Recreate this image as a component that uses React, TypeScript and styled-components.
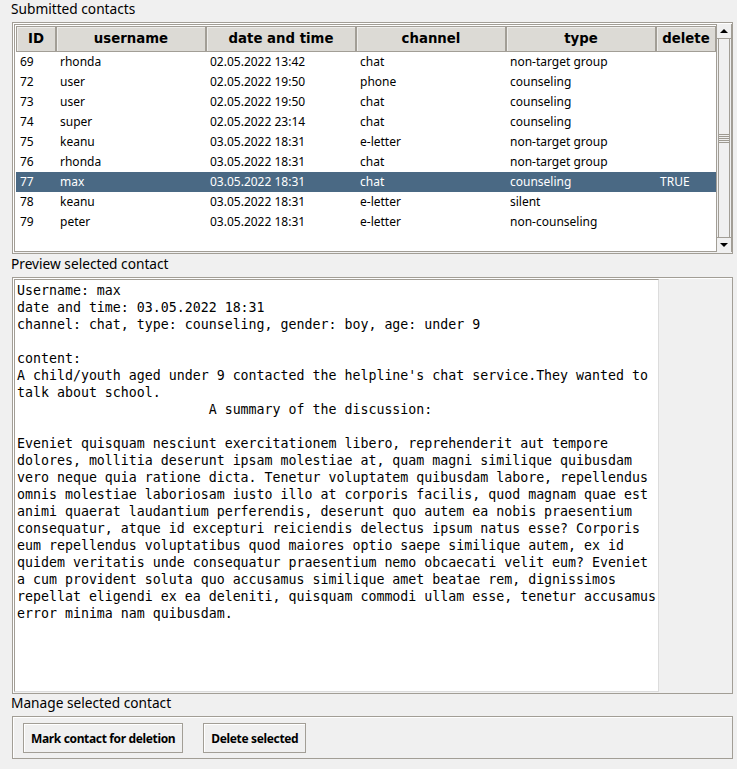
import React from "react";
import styled, { createGlobalStyle } from "styled-components";

const GlobalStyle = createGlobalStyle`
  html, body {
    margin: 0;
    padding: 0;
    background: #f0f0f0;
  }
  body {
    font-family: "Noto Sans", "DejaVu Sans", sans-serif;
    color: #000;
  }
  * { box-sizing: border-box; }
`;

const BORDER = "#a29e96";

const Page = styled.div`
  width: 737px;
  height: 769px;
  padding: 0 0 0 11px;
  display: flex;
  flex-direction: column;
  overflow: hidden;
`;

const SectionLabel = styled.div<{ $h: number; $gap: number }>`
  height: ${(p) => p.$h}px;
  line-height: ${(p) => p.$h}px;
  margin-bottom: ${(p) => p.$gap}px;
  font-size: 13.7px;
  white-space: nowrap;
`;

const Frame = styled.div<{ $h: number }>`
  margin-left: 1px;
  width: 721px;
  height: ${(p) => p.$h}px;
  border: 1px solid ${BORDER};
  box-shadow: inset 1px 1px 0 #ffffff;
  padding: 1px;
  display: flex;
`;

const TreeArea = styled.div`
  width: 702px;
  height: 100%;
  background: #ffffff;
  border: 1px solid ${BORDER};
  border-right: none;
  padding: 1px 0 0 1px;
  display: flex;
  flex-direction: column;
`;

const Grid = styled.div`
  display: grid;
  grid-template-columns: 40px 150px 150px 150px 150px 60px;
`;

const HeadCell = styled.div`
  height: 26px;
  background: #dcdad5;
  border: 1px solid ${BORDER};
  box-shadow: inset 1px 1px 0 #eeedeb;
  font-family: "DejaVu Sans", sans-serif;
  font-weight: 700;
  font-size: 13.3px;
  display: flex;
  align-items: center;
  justify-content: center;
  white-space: nowrap;
  padding-bottom: 1px;
`;

const Row = styled.div<{ $selected?: boolean }>`
  display: contents;
  & > div {
    background: ${(p) => (p.$selected ? "#4a6984" : "#ffffff")};
    color: ${(p) => (p.$selected ? "#ffffff" : "#000000")};
  }
`;

const Cell = styled.div`
  height: 20px;
  line-height: 19px;
  padding-left: 4px;
  font-size: 12px;
  white-space: nowrap;
  overflow: hidden;
`;

const Scrollbar = styled.div`
  flex: 1;
  display: flex;
  flex-direction: column;
  border-left: 1px solid ${BORDER};
  border-right: 1px solid ${BORDER};
  background: #f0f0f0;
`;

const ArrowButton = styled.div<{ $down?: boolean }>`
  height: 15px;
  display: flex;
  align-items: center;
  justify-content: center;
  border: 1px solid ${BORDER};
  border-left: none;
  border-right: none;
  ${(p) => (p.$down ? "border-bottom: none;" : "border-top: none;")}
  &::after {
    content: "";
    width: 0;
    height: 0;
    border-left: 4px solid transparent;
    border-right: 4px solid transparent;
    ${(p) =>
      p.$down
        ? "border-top: 4px solid #000;"
        : "border-bottom: 4px solid #000;"}
  }
`;

const Thumb = styled.div`
  flex: 1;
  margin: 0 1px;
  border-left: 1px solid ${BORDER};
  border-right: 1px solid ${BORDER};
  display: flex;
  align-items: center;
  justify-content: center;
`;

const Grip = styled.div`
  width: 10px;
  height: 9px;
  background: repeating-linear-gradient(
    to bottom,
    #9e9a91 0px,
    #9e9a91 1px,
    transparent 1px,
    transparent 2px
  );
`;

const TextBox = styled.pre`
  margin: 0;
  width: 645px;
  height: 100%;
  background: #ffffff;
  border-top: 1px solid ${BORDER};
  border-left: 1px solid ${BORDER};
  border-right: 1px solid #dcdcdc;
  border-bottom: 1px solid #dcdcdc;
  padding: 2px 0 0 2px;
  font-family: "DejaVu Sans Mono", monospace;
  font-size: 13.27px;
  line-height: 17px;
  white-space: pre;
  overflow: hidden;
`;

const ButtonBar = styled(Frame)`
  padding: 6px 0 0 10px;
  gap: 20px;
  align-items: flex-start;
`;

const Button = styled.button`
  height: 30px;
  padding: 0 7px;
  background: #f0f0f0;
  border: 1px solid ${BORDER};
  box-shadow: inset 1px 1px 0 #ffffff;
  font-family: "Noto Sans", "DejaVu Sans", sans-serif;
  font-weight: 700;
  font-size: 12px;
  letter-spacing: -0.35px;
  color: #000;
  cursor: pointer;
`;

type Contact = {
  id: number;
  user: string;
  date: string;
  channel: string;
  type: string;
  del: string;
};

const contacts: Contact[] = [
  { id: 69, user: "rhonda", date: "02.05.2022 13:42", channel: "chat", type: "non-target group", del: "" },
  { id: 72, user: "user", date: "02.05.2022 19:50", channel: "phone", type: "counseling", del: "" },
  { id: 73, user: "user", date: "02.05.2022 19:50", channel: "chat", type: "counseling", del: "" },
  { id: 74, user: "super", date: "02.05.2022 23:14", channel: "chat", type: "counseling", del: "" },
  { id: 75, user: "keanu", date: "03.05.2022 18:31", channel: "e-letter", type: "non-target group", del: "" },
  { id: 76, user: "rhonda", date: "03.05.2022 18:31", channel: "chat", type: "non-target group", del: "" },
  { id: 77, user: "max", date: "03.05.2022 18:31", channel: "chat", type: "counseling", del: "TRUE" },
  { id: 78, user: "keanu", date: "03.05.2022 18:31", channel: "e-letter", type: "silent", del: "" },
  { id: 79, user: "peter", date: "03.05.2022 18:31", channel: "e-letter", type: "non-counseling", del: "" },
];

const headers = ["ID", "username", "date and time", "channel", "type", "delete"];

const preview = [
  "Username: max",
  "date and time: 03.05.2022 18:31",
  "channel: chat, type: counseling, gender: boy, age: under 9",
  "",
  "content:",
  "A child/youth aged under 9 contacted the helpline's chat service.They wanted to",
  "talk about school.",
  "                        A summary of the discussion:",
  "",
  "Eveniet quisquam nesciunt exercitationem libero, reprehenderit aut tempore",
  "dolores, mollitia deserunt ipsam molestiae at, quam magni similique quibusdam",
  "vero neque quia ratione dicta. Tenetur voluptatem quibusdam labore, repellendus",
  "omnis molestiae laboriosam iusto illo at corporis facilis, quod magnam quae est",
  "animi quaerat laudantium perferendis, deserunt quo autem ea nobis praesentium",
  "consequatur, atque id excepturi reiciendis delectus ipsum natus esse? Corporis",
  "eum repellendus voluptatibus quod maiores optio saepe similique autem, ex id",
  "quidem veritatis unde consequatur praesentium nemo obcaecati velit eum? Eveniet",
  "a cum provident soluta quo accusamus similique amet beatae rem, dignissimos",
  "repellat eligendi ex ea deleniti, quisquam commodi ullam esse, tenetur accusamus",
  "error minima nam quibusdam.",
].join("\n");

export default function App() {
  return (
    <>
      <GlobalStyle />
      <Page>
        <SectionLabel $h={17} $gap={5}>Submitted contacts</SectionLabel>
        <Frame $h={232}>
          <TreeArea>
            <Grid>
              {headers.map((h) => (
                <HeadCell key={h}>{h}</HeadCell>
              ))}
              {contacts.map((c) => (
                <Row key={c.id} $selected={c.id === 77}>
                  <Cell>{c.id}</Cell>
                  <Cell>{c.user}</Cell>
                  <Cell>{c.date}</Cell>
                  <Cell>{c.channel}</Cell>
                  <Cell>{c.type}</Cell>
                  <Cell>{c.del}</Cell>
                </Row>
              ))}
            </Grid>
          </TreeArea>
          <Scrollbar>
            <ArrowButton />
            <Thumb>
              <Grip />
            </Thumb>
            <ArrowButton $down />
          </Scrollbar>
        </Frame>
        <SectionLabel $h={20} $gap={3}>Preview selected contact</SectionLabel>
        <Frame $h={417}>
          <TextBox>{preview}</TextBox>
        </Frame>
        <SectionLabel $h={17} $gap={5}>Manage selected contact</SectionLabel>
        <ButtonBar $h={43}>
          <Button>Mark contact for deletion</Button>
          <Button>Delete selected</Button>
        </ButtonBar>
      </Page>
    </>
  );
}
